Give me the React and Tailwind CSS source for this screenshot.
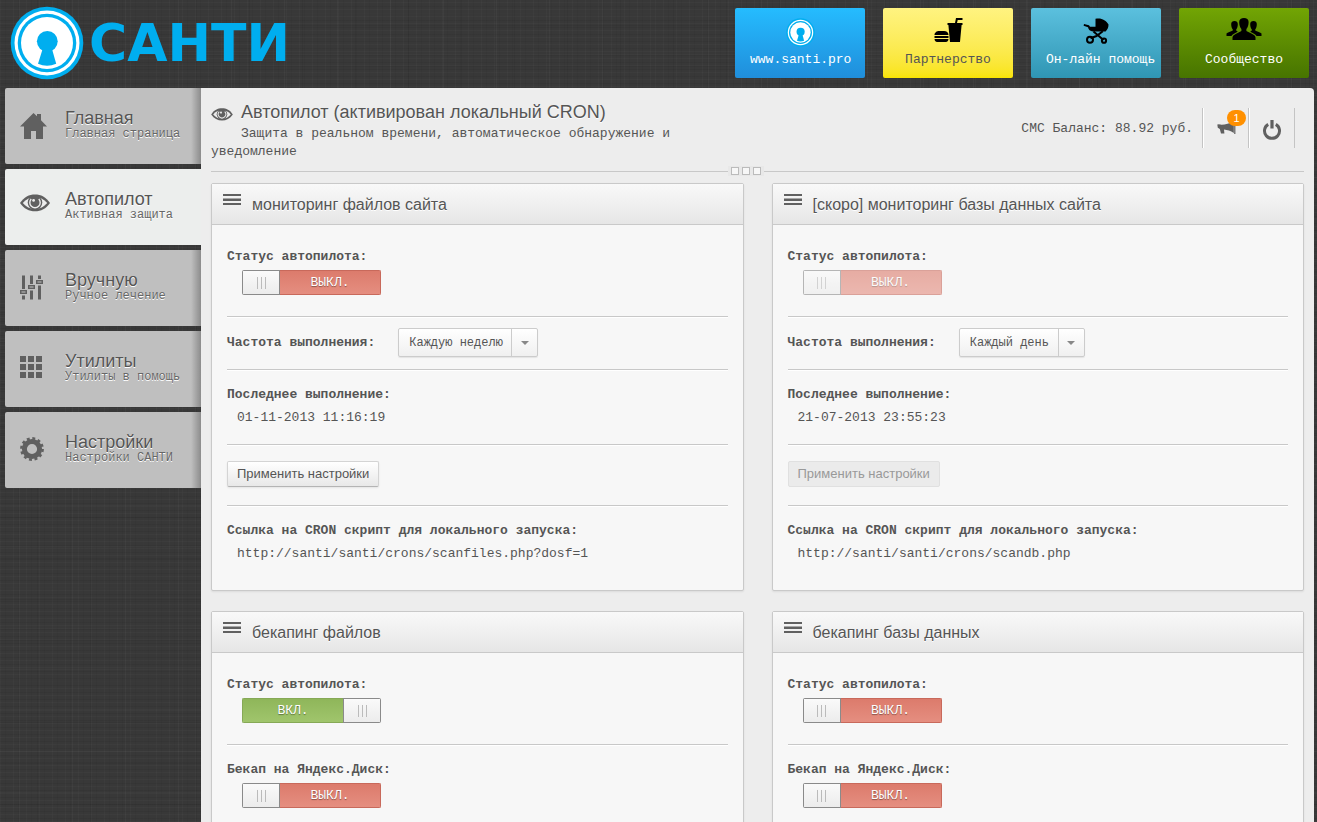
import React from "react";

const MONO = "font-['Liberation_Mono','Courier_New',monospace]";
const SANS = "font-['Liberation_Sans',Arial,sans-serif]";
const LINEN =
  "bg-[#383838] bg-[repeating-linear-gradient(0deg,rgba(255,255,255,0.02)_0_1px,transparent_1px_3px,rgba(0,0,0,0.05)_3px_4px,transparent_4px_7px),repeating-linear-gradient(90deg,rgba(255,255,255,0.02)_0_1px,transparent_1px_5px,rgba(0,0,0,0.04)_5px_6px,transparent_6px_13px),repeating-linear-gradient(0deg,transparent_0_17px,rgba(0,0,0,0.06)_17px_18px,transparent_18px_29px,rgba(255,255,255,0.02)_29px_30px,transparent_30px_41px),repeating-linear-gradient(90deg,transparent_0_19px,rgba(255,255,255,0.03)_19px_20px,transparent_20px_37px,rgba(0,0,0,0.06)_37px_38px,transparent_38px_53px)]";

function Lock({ className }) {
  return (
    <svg viewBox="0 0 74 74" className={className} aria-hidden="true">
      <circle cx="37" cy="37" r="36.3" fill="#00aeef" />
      <circle cx="37" cy="37" r="32.5" fill="#fff" />
      <circle cx="37" cy="37" r="29.3" fill="#00aeef" />
      <circle cx="37" cy="37" r="26" fill="#fff" />
      <circle cx="37.3" cy="35.3" r="10.4" fill="#00aeef" />
      <path d="M32.6 43 L28 57.8 Q37 61.8 46.2 57.8 L42 43 Z" fill="#00aeef" />
    </svg>
  );
}

function FoodIcon() {
  return (
    <svg width="29" height="25" viewBox="0 0 29 25" aria-hidden="true">
      <path d="M13.5 5 H21 L22 0 H28.5 V2 H23.7 L23 5 H28.5 V7 H27.6 L26 24 H16 L14.4 7 H13.5 Z" />
      <path d="M0.5 17 C0.5 14.5 3 13 5 13 H10 C12.5 13 14.5 14.5 14.5 17 Z M0.5 18 H14.5 V20 H0.5 Z M0.5 21 H14.5 C14.5 23 13 24 12 24 H3 C2 24 0.5 23 0.5 21 Z" />
    </svg>
  );
}

function StrollerIcon() {
  return (
    <svg width="26" height="26" viewBox="0 0 26 26" aria-hidden="true">
      <path d="M12.5 8.8 V0.8 C18 -0.6 23 2 25.5 6.5 C25.6 9.5 24.5 12 22.6 13.4 H10 C7 13.4 5.6 12 5 9.3 L0.6 7.8 L1 6 L6 7.2 L7 8.8 Z" />
      <path d="M10.5 13.5 L20.5 22 M19.8 13.2 L13.5 18 L7.5 20.3" fill="none" stroke="#000" strokeWidth="2" />
      <circle cx="7" cy="21.7" r="3" fill="none" stroke="#000" strokeWidth="2" />
      <circle cx="21" cy="22.7" r="2.1" fill="none" stroke="#000" strokeWidth="2" />
    </svg>
  );
}

function GroupIcon() {
  return (
    <svg width="36" height="23" viewBox="0 0 36 23" aria-hidden="true">
      <path d="M13.2 4 C13.2 1.2 15.2 0 18 0 S22.6 1.2 22.6 4 C22.6 7 21.8 9.6 20.4 11 V13 C24 15 29.5 16.5 29.5 19.5 V22 H6.5 V19.5 C6.5 16.5 12 15 15.4 13 V11 C14 9.6 13.2 7 13.2 4 Z" />
      <path d="M5.2 6 C5.2 4 6.5 3 8.5 3 S11.8 4 11.8 6 C11.8 8.5 11.2 10.5 10.2 11.6 V12.6 L11.8 13.8 C9 15.2 6.5 16 5.4 18 H0.5 V15.6 C1.5 14.6 5 13.8 6.8 12.6 V11.6 C5.8 10.5 5.2 8.5 5.2 6 Z" />
      <path d="M30.8 6 C30.8 4 29.5 3 27.5 3 S24.2 4 24.2 6 C24.2 8.5 24.8 10.5 25.8 11.6 V12.6 L24.2 13.8 C27 15.2 29.5 16 30.6 18 H35.5 V15.6 C34.5 14.6 31 13.8 29.2 12.6 V11.6 C30.2 10.5 30.8 8.5 30.8 6 Z" />
    </svg>
  );
}

function EyeIcon({ className }) {
  return (
    <svg viewBox="0 0 30 18" className={className} fill="#606060" aria-hidden="true">
      <path d="M0 9 C4 3 9 0.5 15 0.5 S26 3 30 9 C26 14.8 21 17.3 15 17.3 S4 14.8 0 9 Z" />
      <path d="M2.8 9 C6 5 10 3.2 15 3.2 S24 5 27.2 9 C24 13 20 14.8 15 14.8 S6 13 2.8 9 Z" fill="#ededed" />
      <circle cx="15" cy="8.6" r="7.3" />
      <path d="M11.2 5 A5.2 5.2 0 1 0 18.8 5" fill="none" stroke="#ededed" strokeWidth="1.4" />
      <circle cx="13.6" cy="6.4" r="1.4" fill="#ededed" />
    </svg>
  );
}

function HomeIcon() {
  return (
    <svg width="27" height="27" viewBox="0 0 27 27" fill="#606060" aria-hidden="true">
      <path d="M13.5 0 L17 3.3 V1 H21 V7.2 L27 13.6 H23 V26 H16 V18 H11 V26 H4 V13.6 H0 Z" />
    </svg>
  );
}

function SlidersIcon() {
  return (
    <svg width="24" height="25" viewBox="0 0 24 25" fill="#606060" aria-hidden="true">
      <path d="M2 0.5 H5 V14 H2 Z M0 15 H7 V19 H0 Z M2 20.5 H5 V24.5 H2 Z" />
      <path d="M10 0.5 H13 V9 H10 Z M8 10 H15 V14 H8 Z M10 15.5 H13 V24.5 H10 Z" />
      <path d="M18 0.5 H21 V4 H18 Z M16 5 H23 V9 H16 Z M18 10.5 H21 V24.5 H18 Z" />
      <path d="M1.5 16.5 H5.5 V17.5 H1.5 Z M9.5 11.5 H13.5 V12.5 H9.5 Z M17.5 6.5 H21.5 V7.5 H17.5 Z" fill="#bfbfbf" />
    </svg>
  );
}

function GridIcon() {
  return (
    <svg width="22" height="22" viewBox="0 0 22 22" fill="#606060" aria-hidden="true">
      <path d="M0 0h6v6H0z M8 0h6v6H8z M16 0h6v6h-6z M0 8h6v6H0z M8 8h6v6H8z M16 8h6v6h-6z M0 16h6v6H0z M8 16h6v6H8z M16 16h6v6h-6z" />
    </svg>
  );
}

function GearIcon() {
  return (
    <svg width="24" height="24" viewBox="0 0 24 24" aria-hidden="true">
      <circle cx="12" cy="12" r="7.6" fill="none" stroke="#606060" strokeWidth="5" />
      <circle cx="12" cy="12" r="10.6" fill="none" stroke="#606060" strokeWidth="2.6" strokeDasharray="2.9 2.65" />
    </svg>
  );
}

function BarsIcon() {
  return (
    <svg width="18" height="11" viewBox="0 0 18 11" aria-hidden="true">
      <path d="M0 0h18v2H0z M0 9h18v2H0z M0 5h18v2H0z" fill="#606060" />
      <path d="M0 4h18v1H0z" fill="#a8a8a8" />
    </svg>
  );
}

function MegaphoneIcon() {
  return (
    <svg width="19" height="15" viewBox="0 0 19 15" fill="#606060" aria-hidden="true">
      <path d="M0.3 3.6 L2 3.2 L3 3.6 C8 3.8 12 3 16.8 0 V12 C13.5 10 10.5 9 7 8.6 L7.4 12.6 H4 L2.8 8 L0.8 6.8 Z" />
      <path d="M17.2 0 H18.4 V13 H17.2 Z" />
    </svg>
  );
}

function PowerIcon() {
  return (
    <svg width="20" height="20" viewBox="0 0 20 20" aria-hidden="true">
      <path d="M6.2 4.4 A7.5 7.5 0 1 0 13.8 4.4" fill="none" stroke="#606060" strokeWidth="3" />
      <path d="M8.4 0h3.2v8.5H8.4z" fill="#606060" />
    </svg>
  );
}

const tiles = [
  { label: "www.santi.pro", icon: <Lock className="size-[29px]" />, style: "from-[#25bcff] to-[#208edb] text-white" },
  { label: "Партнерство", icon: <FoodIcon />, style: "from-[#fff380] to-[#f9e400] text-[#555]" },
  { label: "Он-лайн помощь", icon: <StrollerIcon />, style: "from-[#5bc0de] to-[#2f96b4] text-white" },
  { label: "Сообщество", icon: <GroupIcon />, style: "from-[#72a504] to-[#477400] text-white" },
];

const nav = [
  { title: "Главная", sub: "Главная страница", icon: <HomeIcon /> },
  { title: "Автопилот", sub: "Активная защита", icon: <EyeIcon className="w-[30px] h-[18px]" />, active: true },
  { title: "Вручную", sub: "Ручное лечение", icon: <SlidersIcon /> },
  { title: "Утилиты", sub: "Утилиты в помощь", icon: <GridIcon /> },
  { title: "Настройки", sub: "Настройки САНТИ", icon: <GearIcon /> },
];

function Handle() {
  return (
    <span className="flex w-[38px] shrink-0 items-center justify-center gap-[3px] border border-[#8a8a8a] bg-linear-to-b from-[#fafafa] to-[#ececec]">
      <span className="h-3 w-px bg-[#bbb]" />
      <span className="h-3 w-px bg-[#bbb]" />
      <span className="h-3 w-px bg-[#bbb]" />
    </span>
  );
}

function Toggle({ id, on, disabled }) {
  const [value, setValue] = React.useState(!!on);
  return (
    <button
      id={id}
      type="button"
      role="switch"
      aria-checked={value}
      disabled={disabled}
      onClick={() => setValue(!value)}
      className={`ml-[15px] mt-1 flex h-[25px] w-[139px] overflow-hidden rounded-xs text-[13px] text-white [text-shadow:0_1px_1px_rgba(0,0,0,0.4)] ${disabled ? "opacity-60" : ""}`}
    >
      {!value && <Handle />}
      <span
        className={
          value
            ? "h-full grow border border-r-0 border-[#86a956] bg-linear-to-b from-[#8fb65a] to-[#a0c56c] text-center leading-6"
            : "h-full grow border border-l-0 border-[#c8695b] bg-linear-to-b from-[#dc7b6c] to-[#e58e80] text-center leading-6"
        }
      >
        {value ? "ВКЛ." : "ВЫКЛ."}
      </span>
      {value && <Handle />}
    </button>
  );
}

function Row({ className, last, children }) {
  return (
    <div className={`${className} ${last ? "" : "border-b border-[#c8c8c8] shadow-[0_1px_0_#fff]"}`}>{children}</div>
  );
}

function Card({ title, children }) {
  return (
    <section className="rounded-xs border border-[#c9c9c9] bg-[#f7f7f7] shadow-[0_1px_2px_rgba(0,0,0,0.08)]">
      <header className="flex h-[41px] items-start gap-[11px] border-b border-[#c9c9c9] bg-linear-to-b from-[#f9f9f9] to-[#e6e6e6] pl-[11px] pt-[10px]">
        <BarsIcon />
        <h2 className={`${SANS} text-base leading-[22px] text-[#555] [text-shadow:0_1px_0_#fff]`}>{title}</h2>
      </header>
      <div className="px-[15px]">{children}</div>
    </section>
  );
}

function MonitorCard({ id, title, period, selectWidth, last, url, disabled }) {
  return (
    <Card title={title}>
      <Row className="pb-[21px] pt-[23px]">
        <label htmlFor={`${id}-status`} className="block font-bold">Статус автопилота:</label>
        <Toggle id={`${id}-status`} disabled={disabled} />
      </Row>
      <Row className="flex items-center gap-[23px] pb-3 pt-[11px]">
        <label htmlFor={`${id}-period`} className="font-bold">Частота выполнения:</label>
        <span className={`relative flex h-[29px] rounded-xs border border-[#ccc] bg-linear-to-b from-white to-[#f0f0f0] shadow-[0_1px_1px_rgba(0,0,0,0.08)] ${selectWidth}`}>
          <select id={`${id}-period`} defaultValue={period} className="w-full appearance-none bg-transparent pl-[10px] text-xs text-[#555] outline-none">
            <option>Каждый день</option>
            <option>Каждую неделю</option>
          </select>
          <span className="pointer-events-none absolute inset-y-0 right-0 flex w-[26px] items-center justify-center border-l border-[#ccc]">
            <svg width="8" height="4" viewBox="0 0 8 4" aria-hidden="true">
              <path d="M0 0h8L4 4z" fill="#888" />
            </svg>
          </span>
        </span>
      </Row>
      <Row className="pb-[17px] pt-4">
        <p className="font-bold">Последнее выполнение:</p>
        <p className="mt-[5px] pl-[10px]">{last}</p>
      </Row>
      <Row className="pb-[18px] pt-4">
        <button
          type="button"
          disabled={disabled}
          className={`${SANS} block h-[26px] rounded-xs border px-[9px] text-[13px] leading-6 ${
            disabled
              ? "border-[#e0e0e0] bg-[#ebebeb] text-[#999]"
              : "border-[#d4d4d4] border-b-[#b4b4b4] bg-linear-to-b from-white to-[#e8e8e8] text-[#555] shadow-[0_1px_2px_rgba(0,0,0,0.08)]"
          }`}
        >
          Применить настройки
        </button>
      </Row>
      <Row className="pb-[27px] pt-4" last>
        <p className="font-bold">Ссылка на CRON скрипт для локального запуска:</p>
        <p className="mt-[5px] pl-[10px]">{url}</p>
      </Row>
    </Card>
  );
}

function BackupCard({ id, title, on }) {
  return (
    <Card title={title}>
      <Row className="pb-[21px] pt-[23px]">
        <label htmlFor={`${id}-status`} className="block font-bold">Статус автопилота:</label>
        <Toggle id={`${id}-status`} on={on} />
      </Row>
      <Row className="pb-10 pt-4" last>
        <label htmlFor={`${id}-disk`} className="block font-bold">Бекап на Яндекс.Диск:</label>
        <Toggle id={`${id}-disk`} />
      </Row>
    </Card>
  );
}

export default function App() {
  return (
    <div className={`${MONO} ${LINEN} flex h-screen flex-col overflow-y-auto text-[13px] leading-[18px] text-[#555] [scrollbar-width:none]`}>
      <header className="flex h-[88px] shrink-0 items-start justify-between pl-[10px] pr-2">
        <a href="#top" className="flex items-center gap-[5px] pt-[6px] text-[#00aeef]">
          <Lock className="size-[74px]" />
          <span className="font-['DejaVu_Sans',sans-serif] text-[52px] font-bold leading-[74px]">САНТИ</span>
        </a>
        <nav className="flex gap-[18px] pt-2">
          {tiles.map((t) => (
            <a
              key={t.label}
              href="#link"
              className={`block h-[70px] w-[130px] whitespace-nowrap rounded-xs bg-linear-to-b px-[15px] pt-[10px] text-center ${t.style}`}
            >
              <span className="flex h-[33px] items-start justify-center">{t.icon}</span>
              {t.label}
            </a>
          ))}
        </nav>
      </header>

      <div className="flex grow items-stretch pr-[3px]">
        <nav className="flex w-[201px] shrink-0 flex-col gap-[5px] pl-[5px]">
          {nav.map((n) => (
            <a
              key={n.title}
              href="#section"
              className={`flex h-[76px] rounded-l-xs pl-[15px] [text-shadow:0_1px_0_#fff] ${
                n.active ? "bg-[#eceeed]" : "bg-[#bfbfbf] bg-[linear-gradient(to_left,#8c8c8c,#bfbfbf_10px)]"
              }`}
            >
              <span className="flex w-[45px] items-start pt-[25px]">{n.icon}</span>
              <span className="pt-5">
                <span className={`${SANS} block text-lg leading-5`}>{n.title}</span>
                <span className="block text-xs leading-3 text-[#666]">{n.sub}</span>
              </span>
            </a>
          ))}
        </nav>

        <main className="grow rounded-tr-sm bg-[#ededed] px-[10px] pb-5">
          <div className="flex h-[83px] items-start justify-between">
            <div className="w-1/2 pt-[13px]">
              <h1 className={`${SANS} flex items-center gap-2 text-lg leading-[22px] [text-shadow:0_1px_0_#fff]`}>
                <EyeIcon className="mt-[5px] h-[13px] w-[22px]" />
                Автопилот (активирован локальный CRON)
              </h1>
              <p className="mt-[2px] indent-[30px]">Защита в реальном времени, автоматическое обнаружение и уведомление</p>
            </div>
            <div className="flex items-start pr-[9px] pt-5">
              <p className="pr-[9px] pt-3">СМС Баланс: 88.92 руб.</p>
              <button type="button" aria-label="Уведомления" className="relative h-10 w-[46px] border-l border-[#c4c4c4] pl-[14px] shadow-[inset_1px_0_0_#fff]">
                <MegaphoneIcon />
                <span className={`${SANS} absolute left-[24px] top-[2px] h-4 w-[19px] rounded-full bg-[#ff9000] text-[11px] leading-4 text-white`}>1</span>
              </button>
              <button type="button" aria-label="Выход" className="flex h-10 w-[47px] items-center justify-center border-x border-[#c4c4c4] pt-1 shadow-[inset_1px_0_0_#fff]">
                <PowerIcon />
              </button>
            </div>
          </div>
          <div className="relative border-t border-[#c8c8c8] shadow-[inset_0_1px_0_#fff]">
            <span className="absolute -top-[6px] left-1/2 -ml-[30px] flex w-9 justify-center gap-[3px] bg-[#e8e8e8] py-px">
              <span className="size-2 border border-[#bbb] bg-[#f7f7f7]" />
              <span className="size-2 border border-[#bbb] bg-[#f7f7f7]" />
              <span className="size-2 border border-[#bbb] bg-[#f7f7f7]" />
            </span>
          </div>
          <div className="mt-[11px] grid grid-cols-2 gap-x-7 gap-y-5">
            <MonitorCard
              id="files"
              title="мониторинг файлов сайта"
              period="Каждую неделю"
              selectWidth="w-[140px]"
              last="01-11-2013 11:16:19"
              url="http://santi/santi/crons/scanfiles.php?dosf=1"
            />
            <MonitorCard
              id="db"
              title="[скоро] мониторинг базы данных сайта"
              period="Каждый день"
              selectWidth="w-[126px]"
              last="21-07-2013 23:55:23"
              url="http://santi/santi/crons/scandb.php"
              disabled
            />
            <BackupCard id="backup-files" title="бекапинг файлов" on />
            <BackupCard id="backup-db" title="бекапинг базы данных" />
          </div>
        </main>
      </div>
    </div>
  );
}
